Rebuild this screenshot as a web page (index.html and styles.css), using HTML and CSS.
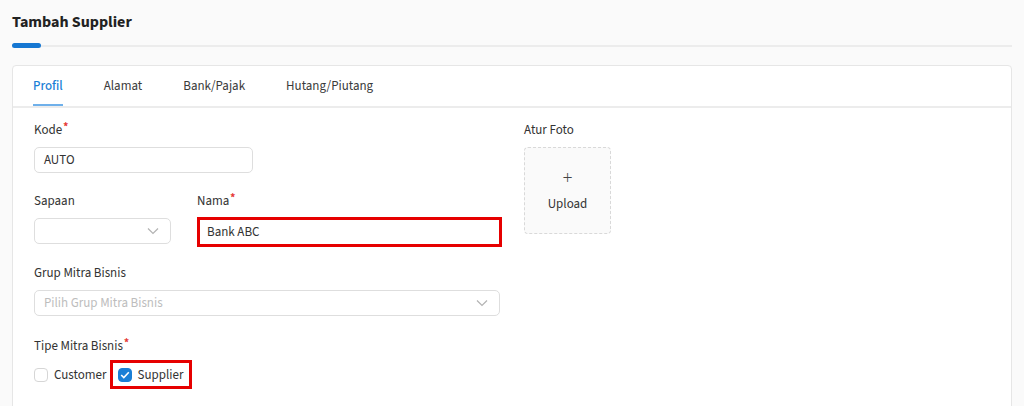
FILE: index.html
```html
<!DOCTYPE html>
<html lang="id">
<head>
<meta charset="utf-8">
<title>Tambah Supplier</title>
<link rel="stylesheet" href="styles.css">
</head>
<body>
<div class="page">
  <h1 class="title">Tambah Supplier</h1>
  <div class="title-rule"><span class="rule-bar"></span><span class="rule-line"></span></div>

  <div class="card">
    <div class="tabs">
      <div class="tab active">Profil</div>
      <div class="tab">Alamat</div>
      <div class="tab">Bank/Pajak</div>
      <div class="tab">Hutang/Piutang</div>
    </div>

    <div class="content">
      <div class="left-col">
        <div class="field">
          <div class="label">Kode<span class="req">*</span></div>
          <div class="input input-kode">AUTO</div>
        </div>

        <div class="row-two">
          <div class="field">
            <div class="label">Sapaan</div>
            <div class="input select">
              <span></span>
              <svg class="chev" width="12" height="8" viewBox="0 0 12 8"><path d="M1 1.5 L6 6.5 L11 1.5" fill="none" stroke="#b3b3b3" stroke-width="1.2"/></svg>
            </div>
          </div>
          <div class="field">
            <div class="label">Nama<span class="req">*</span></div>
            <div class="input input-nama">Bank ABC</div>
          </div>
        </div>

        <div class="field field-grup">
          <div class="label">Grup Mitra Bisnis</div>
          <div class="input select">
            <span class="placeholder">Pilih Grup Mitra Bisnis</span>
            <svg class="chev" width="12" height="8" viewBox="0 0 12 8"><path d="M1 1.5 L6 6.5 L11 1.5" fill="none" stroke="#b3b3b3" stroke-width="1.2"/></svg>
          </div>
        </div>

        <div class="field field-tipe">
          <div class="label">Tipe Mitra Bisnis<span class="req">*</span></div>
          <div class="checks">
            <label class="check">
              <span class="box"></span>
              <span class="check-text">Customer</span>
            </label>
            <label class="check check-marked">
              <span class="box box-on">
                <svg width="10" height="8" viewBox="0 0 10 8"><path d="M1.2 4 L3.8 6.5 L8.8 1.3" fill="none" stroke="#fff" stroke-width="1.6"/></svg>
              </span>
              <span class="check-text">Supplier</span>
            </label>
          </div>
        </div>
      </div>

      <div class="right-col">
        <div class="label">Atur Foto</div>
        <div class="upload">
          <span class="plus">+</span>
          <span class="upload-text">Upload</span>
        </div>
      </div>
    </div>
  </div>
</div>
</body>
</html>
```

FILE: styles.css
```css
* { box-sizing: border-box; }

body {
  margin: 0;
  background: #fafafa;
  font-family: "Source Sans Pro", "Source Sans 3", Lato, "Liberation Sans", sans-serif;
  font-size: 13px;
  color: #333;
}

.page {
  padding: 12px 12px 0 12px;
}

.title {
  margin: 0;
  font-size: 16px;
  line-height: 20px;
  font-weight: 700;
  color: #222;
}

.title-rule {
  margin-top: 11px;
  height: 5px;
  display: flex;
  align-items: center;
}

.rule-bar {
  width: 29px;
  height: 5px;
  border-radius: 3px;
  background: #1677d2;
}

.rule-line {
  flex: 1;
  height: 2px;
  background: #ececec;
}

.card {
  margin-top: 17px;
  background: #fff;
  border: 1px solid #e6e6e6;
  border-radius: 4px;
  height: 360px;
}

.tabs {
  display: flex;
  height: 42px;
  padding-left: 20px;
  border-bottom: 2px solid #ececec;
  gap: 41px;
}

.tab {
  height: 40px;
  line-height: 40px;
  color: #3a3a3a;
  font-size: 13px;
}

.tab.active {
  color: #1a7fd6;
  font-weight: 500;
  border-bottom: 2px solid #6fb0ea;
}

.content {
  display: flex;
  padding: 13px 0 0 21px;
  gap: 24px;
}

.left-col {
  width: 466px;
}

.label {
  font-size: 13px;
  line-height: 18px;
  height: 18px;
  color: #333;
}

.req {
  color: #e53935;
  font-size: 11px;
  font-weight: 700;
  line-height: 0;
  position: relative;
  top: -4px;
  margin-left: 1px;
}

.field .input {
  margin-top: 8px;
}

.input {
  height: 26px;
  border: 1px solid #dedede;
  border-radius: 5px;
  background: #fff;
  padding: 0 9px;
  display: flex;
  align-items: center;
  font-size: 13px;
  color: #333;
}

.input-kode {
  width: 219px;
}

.row-two {
  margin-top: 19px;
  display: grid;
  grid-template-columns: 137px 305px;
  column-gap: 26px;
}

.select {
  justify-content: space-between;
  padding-right: 11px;
}

.placeholder {
  color: #bdbdbd;
}

.row-two .field:last-child .input {
  margin-top: 7px;
}

.input-nama {
  height: 30px;
  border: 3px solid #e60000;
  border-radius: 0;
  padding-left: 7px;
}

.field-grup {
  margin-top: 17px;
}

.field-tipe {
  margin-top: 21px;
}

.checks {
  margin-top: 5px;
  display: flex;
  align-items: center;
}

.check {
  display: flex;
  align-items: center;
  gap: 6px;
  height: 29px;
  font-size: 13px;
  color: #333;
}

.check-marked {
  margin-left: 3px;
  border: 3px solid #e60000;
  padding: 0 6px 0 5px;
}

.box {
  width: 14px;
  height: 14px;
  border: 1px solid #d6d6d6;
  border-radius: 4px;
  background: #fff;
  display: flex;
  align-items: center;
  justify-content: center;
}

.box-on {
  background: #1a7fd6;
  border-color: #1a7fd6;
}

.upload {
  margin-top: 8px;
  width: 87px;
  height: 87px;
  border: 1px dashed #d9d9d9;
  border-radius: 4px;
  background: #fafafa;
  display: flex;
  flex-direction: column;
  align-items: center;
  justify-content: center;
  color: #333;
}

.plus {
  font-size: 20px;
  line-height: 20px;
  font-weight: 300;
  color: #444;
}

.upload-text {
  margin-top: 8px;
  margin-bottom: 2px;
  font-size: 13px;
  line-height: 16px;
}
```
